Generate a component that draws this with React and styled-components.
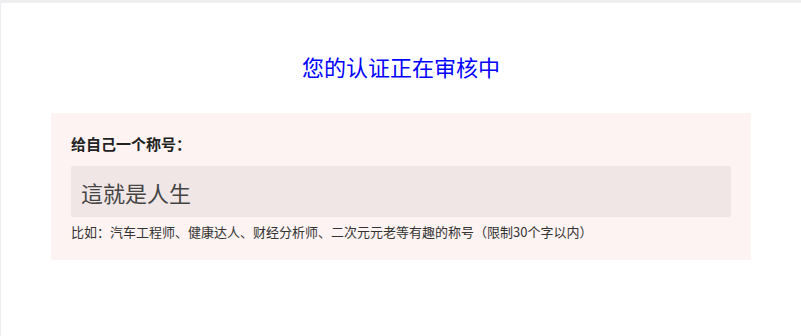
import React from "react";
import styled, { createGlobalStyle } from "styled-components";

const GlobalStyle = createGlobalStyle`
  html, body {
    margin: 0;
    padding: 0;
    background: #eeeef0;
  }
  body {
    font-family: "Noto Sans CJK SC", "Noto Sans", sans-serif;
  }
`;

const Page = styled.div`
  margin: 3px 0 0 1px;
  min-height: 333px;
  background: #ffffff;
  padding-top: 48px;
  box-sizing: border-box;
`;

const Title = styled.h2`
  margin: 0;
  text-align: center;
  font-size: 22px;
  line-height: 30px;
  font-weight: 400;
  color: #0000ff;
`;

const Panel = styled.div`
  width: 700px;
  margin: 32px auto 0;
  padding: 20px 20px 18px;
  box-sizing: border-box;
  background: #fdf3f2;
`;

const Label = styled.div`
  font-size: 15px;
  line-height: 22px;
  font-weight: 700;
  color: #222;
`;

const NameInput = styled.input`
  display: block;
  width: 100%;
  height: 51px;
  margin-top: 11px;
  padding: 0 10px;
  box-sizing: border-box;
  border: none;
  border-radius: 2px;
  outline: none;
  background: #f0e6e6;
  font-family: inherit;
  font-size: 22px;
  color: #444;
`;

const Hint = styled.p`
  margin: 5px 0 0;
  font-size: 13px;
  line-height: 20px;
  color: #333;
`;

export default function App() {
  return (
    <>
      <GlobalStyle />
      <Page>
        <Title>您的认证正在审核中</Title>
        <Panel>
          <Label>给自己一个称号：</Label>
          <NameInput defaultValue="這就是人生" />
          <Hint>
            比如：汽车工程师、健康达人、财经分析师、二次元元老等有趣的称号（限制30个字以内）
          </Hint>
        </Panel>
      </Page>
    </>
  );
}
